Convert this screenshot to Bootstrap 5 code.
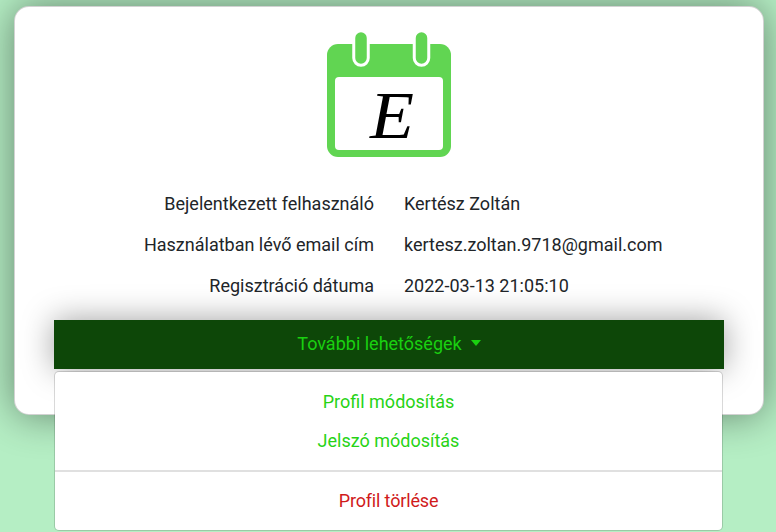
<!DOCTYPE html>
<html lang="hu">
<head>
<meta charset="utf-8">
<meta name="viewport" content="width=device-width, initial-scale=1">
<title>Profil</title>
<link href="https://cdn.jsdelivr.net/npm/bootstrap@5.3.0/dist/css/bootstrap.min.css" rel="stylesheet">
<style>
body{background:#b5eec4;font-family:Roboto,"Liberation Sans",sans-serif;font-size:18px;line-height:27px;color:#212529;height:532px}
.profile-card{width:750px;height:409px;margin:6px 0 0 14px;padding:25px 39px 0;border:1px solid rgba(0,0,0,.176);border-radius:15px;box-shadow:0 0 40px rgba(0,0,0,.45)}
.logo{width:126px;height:126px}
.logo text{font-family:"Liberation Serif",serif;font-style:italic}
.details{margin-top:32px;--bs-gutter-x:30px;row-gap:14px}
.options{margin-top:21px}
.options-btn,.options-btn:hover,.options-btn.show{height:49px;padding:0 0 2px;border:0;border-radius:0;font-size:18px;line-height:27px;background:#0d4708!important;color:#1ad010!important;box-shadow:0 0 32px rgba(0,0,0,.38)}
.options-btn::after{margin-left:9px;vertical-align:4.5px;border-width:6px 5.5px 0}
.options-menu{top:100%;left:0;width:669px;margin-top:2px;padding:10px 0;font-size:18px;border:1px solid rgba(0,0,0,.15);border-radius:5px}
.options-menu .dropdown-item{padding:6px 16px;color:#27d316}
.options-menu .dropdown-divider{margin:10px 0 9px;border-top:2px solid #e0e0e0;opacity:1}
.options-menu .delete-item{color:#d01b1b;letter-spacing:-.16px}
</style>
</head>
<body class="overflow-hidden">
<main class="card profile-card">
  <div class="text-center lh-1">
    <svg class="logo" viewBox="0 0 126 126" role="img" aria-label="E">
      <rect x="1" y="12" width="124" height="113" rx="11" fill="#61d552"/>
      <rect x="9" y="45" width="108" height="73" rx="4" fill="#fff"/>
      <path d="M35 10v16M95.500 10v16" stroke="#fff" stroke-width="17.500" stroke-linecap="round"/>
      <path d="M35 6v20M95.500 6v20" stroke="#61d552" stroke-width="11.500" stroke-linecap="round"/>
      <text x="44" y="105.500" font-size="68" textLength="44" lengthAdjust="spacingAndGlyphs">E</text>
    </svg>
  </div>
  <div class="row details">
    <div class="col-6 text-end">Bejelentkezett felhasználó</div><div class="col-6">Kertész Zoltán</div>
    <div class="col-6 text-end">Használatban lévő email cím</div><div class="col-6">kertesz.zoltan.9718@gmail.com</div>
    <div class="col-6 text-end">Regisztráció dátuma</div><div class="col-6">2022-03-13 21:05:10</div>
  </div>
  <div class="dropdown options">
    <button class="btn dropdown-toggle w-100 options-btn show" type="button" data-bs-toggle="dropdown" aria-expanded="true">További lehetőségek</button>
    <ul class="dropdown-menu show text-center options-menu">
      <li><a class="dropdown-item" href="#">Profil módosítás</a></li>
      <li><a class="dropdown-item" href="#">Jelszó módosítás</a></li>
      <li><hr class="dropdown-divider"></li>
      <li><a class="dropdown-item delete-item" href="#">Profil törlése</a></li>
    </ul>
  </div>
</main>
<script src="https://cdn.jsdelivr.net/npm/bootstrap@5.3.0/dist/js/bootstrap.bundle.min.js"></script>
</body>
</html>
